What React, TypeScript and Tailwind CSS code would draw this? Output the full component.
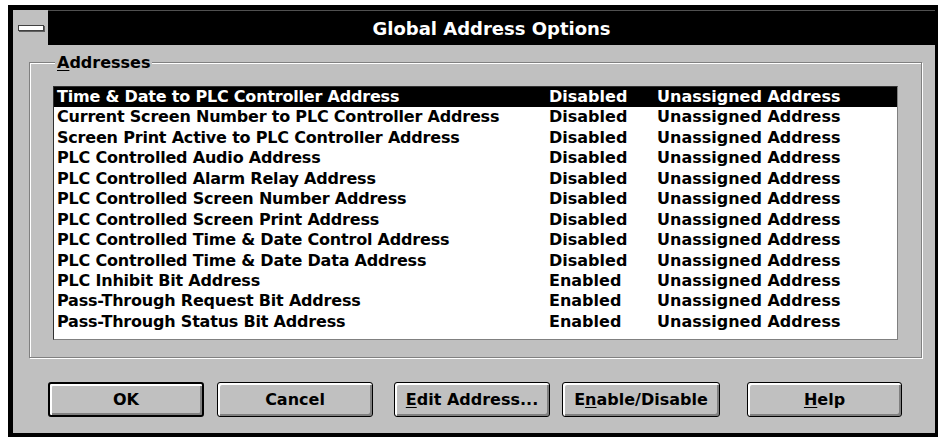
import React from "react";

type Row = { name: string; state: string; addr: string };

const rows: Row[] = [
  { name: "Time & Date to PLC Controller Address", state: "Disabled", addr: "Unassigned Address" },
  { name: "Current Screen Number to PLC Controller Address", state: "Disabled", addr: "Unassigned Address" },
  { name: "Screen Print Active to PLC Controller Address", state: "Disabled", addr: "Unassigned Address" },
  { name: "PLC Controlled Audio Address", state: "Disabled", addr: "Unassigned Address" },
  { name: "PLC Controlled Alarm Relay Address", state: "Disabled", addr: "Unassigned Address" },
  { name: "PLC Controlled Screen Number Address", state: "Disabled", addr: "Unassigned Address" },
  { name: "PLC Controlled Screen Print Address", state: "Disabled", addr: "Unassigned Address" },
  { name: "PLC Controlled Time & Date Control Address", state: "Disabled", addr: "Unassigned Address" },
  { name: "PLC Controlled Time & Date Data Address", state: "Disabled", addr: "Unassigned Address" },
  { name: "PLC Inhibit Bit Address", state: "Enabled", addr: "Unassigned Address" },
  { name: "Pass-Through Request Bit Address", state: "Enabled", addr: "Unassigned Address" },
  { name: "Pass-Through Status Bit Address", state: "Enabled", addr: "Unassigned Address" },
];

function Btn({
  children,
  isDefault,
  className,
}: {
  children: React.ReactNode;
  isDefault?: boolean;
  className?: string;
}) {
  return (
    <button
      className={
        "h-[35px] rounded-[3px] border-black bg-[#c0c0c0] text-[16px] font-bold text-black shadow-[inset_2px_2px_0_#ffffff,inset_-2px_-2px_0_#808080] flex items-center justify-center " +
        (isDefault ? "border-[2px] " : "border ") +
        (className ?? "")
      }
    >
      {children}
    </button>
  );
}

export default function App() {
  return (
    <div className="w-[939px] h-[438px] bg-white pl-[8px] pt-[5px] font-['DejaVu_Sans',sans-serif]">
      <div className="w-[930px] h-[432px] bg-black border-t-[5px] border-l-[5px] border-r-[3px] border-b-[4px] border-black flex flex-col">
        {/* caption */}
        <div className="h-[35px] flex shrink-0">
          <div className="w-[35px] h-[35px] bg-[#c0c0c0] flex items-center justify-center">
            <div className="w-[26px] h-[6px] bg-white border border-[#404040] shadow-[1px_1px_0_#606060]" />
          </div>
          <div className="flex-1 border-t border-[#505050] flex items-center justify-center text-white text-[18px] font-bold">
            Global Address Options
          </div>
        </div>
        {/* client area */}
        <div className="flex-1 bg-[#c0c0c0] pt-[17px] pl-[16px] pr-[13px] flex flex-col">
          <div className="relative w-[893px] h-[296px] border border-[#808080] shadow-[1px_1px_0_#ffffff,inset_1px_1px_0_#ffffff] pt-[23px] pl-[23px]">
            <div className="absolute left-[25px] top-[-9px] bg-[#c0c0c0] px-[2px] text-[16px] font-bold leading-[18px] text-black">
              <span className="underline underline-offset-2">A</span>ddresses
            </div>
            <div className="w-[845px] h-[254px] bg-white border border-t-[#303030] border-l-[#303030] border-b-[#808080] border-r-[#808080]">
              {rows.map((r, i) => (
                <div
                  key={i}
                  className={
                    "grid grid-cols-[492px_108px_1fr] pl-[3px] h-[20.45px] leading-[20.45px] text-[16px] font-bold whitespace-nowrap " +
                    (i === 0 ? "bg-black text-white" : "text-black")
                  }
                >
                  <span className="tracking-[-0.2px]">{r.name}</span>
                  <span>{r.state}</span>
                  <span>{r.addr}</span>
                </div>
              ))}
            </div>
          </div>
          <div className="flex mt-[24px] pl-[19px]">
            <Btn isDefault className="w-[156px]">OK</Btn>
            <Btn className="w-[156px] ml-[13px]">Cancel</Btn>
            <Btn className="w-[156px] ml-[21px]">
              <span className="underline underline-offset-2">E</span>dit Address...
            </Btn>
            <Btn className="w-[158px] ml-[12px]">
              E<span className="underline underline-offset-2">n</span>able/Disable
            </Btn>
            <Btn className="w-[155px] ml-[27px]">
              <span className="underline underline-offset-2">H</span>elp
            </Btn>
          </div>
        </div>
      </div>
    </div>
  );
}
